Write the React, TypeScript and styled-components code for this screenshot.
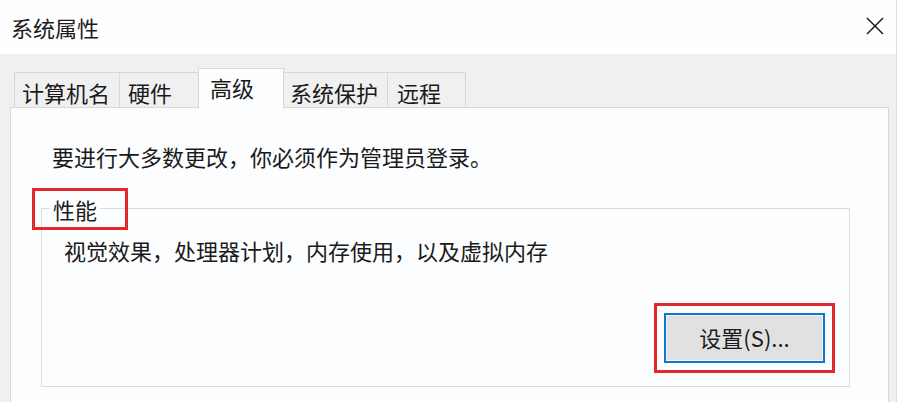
import React from "react";
import styled, { createGlobalStyle } from "styled-components";

const Global = createGlobalStyle`
  html, body { margin: 0; padding: 0; background: #ffffff; }
  body {
    font-family: "Noto Sans CJK SC", "Noto Sans", "Liberation Sans", sans-serif;
    color: #1a1a1a;
    -webkit-font-smoothing: antialiased;
  }
  * { box-sizing: border-box; }
`;

const Window = styled.div`
  width: 897px;
  height: 402px;
  display: flex;
  flex-direction: column;
  border-right: 1px solid #dedede;
  overflow: hidden;
`;

const TitleBar = styled.div`
  height: 54px;
  flex: none;
  background: #fefeff;
  display: flex;
  align-items: center;
  justify-content: space-between;
  padding: 0 12px 0 11px;
`;

const Title = styled.div`
  font-size: 22px;
  line-height: 30px;
  color: #1c1c1c;
  margin-top: -1px;
`;

const CloseBtn = styled.div`
  width: 18px;
  height: 18px;
  display: flex;
  margin-top: -3px;
`;

const Body = styled.div`
  flex: 1;
  background: #f0f0f0;
  display: flex;
  flex-direction: column;
  padding: 14px 7px 0 10px;
`;

const TabStrip = styled.div`
  display: flex;
  align-items: flex-end;
  padding-left: 4px;
  height: 40px;
  position: relative;
  z-index: 1;
`;

const Tab = styled.div<{ $w: number; $active?: boolean; $pad: number }>`
  width: ${(p) => p.$w}px;
  height: ${(p) => (p.$active ? 41 : 36)}px;
  margin-left: -1px;
  margin-bottom: ${(p) => (p.$active ? -1 : 0)}px;
  padding-left: ${(p) => p.$pad}px;
  padding-top: ${(p) => (p.$active ? 3 : 4)}px;
  background: ${(p) => (p.$active ? "#fdfeff" : "#f0f0f0")};
  border: 1px solid #d8d8d8;
  border-bottom: ${(p) => (p.$active ? "none" : "1px solid #d8d8d8")};
  font-size: 22px;
  line-height: 30px;
  white-space: nowrap;
  color: #1a1a1a;
  position: relative;
  z-index: ${(p) => (p.$active ? 2 : 1)};
  &:first-child { margin-left: 0; }
`;

const Panel = styled.div`
  flex: 1;
  margin-top: -1px;
  background: #fcfdfe;
  border: 1px solid #d8d8d8;
  border-bottom: none;
  padding: 33px 38px 0 30px;
  display: flex;
  flex-direction: column;
`;

const Intro = styled.p`
  margin: 0;
  padding-left: 11px;
  font-size: 22px;
  line-height: 30px;
  white-space: nowrap;
`;

const Group = styled.fieldset`
  margin: 22px 0 0 0;
  padding: 12px 0 13px 0;
  border: 1px solid #dcdcdc;
  display: flex;
  flex-direction: column;
  min-width: 0;
`;

const Legend = styled.legend`
  margin-left: 8px;
  padding: 3px 3px 1px 3px;
  font-size: 22px;
  line-height: 26px;
  position: relative;
  &::before {
    content: "";
    position: absolute;
    top: -5px;
    left: -18px;
    right: -28px;
    bottom: -7px;
    border: 3px solid #e2282c;
  }
`;

const Desc = styled.p`
  margin: 0;
  padding-left: 22px;
  font-size: 22px;
  line-height: 30px;
  white-space: nowrap;
`;

const ButtonRow = styled.div`
  display: flex;
  justify-content: flex-end;
  margin-top: 38px;
  padding-right: 14px;
`;

const Highlight = styled.div`
  border: 3px solid #e2282c;
  padding: 7px;
  display: flex;
`;

const Button = styled.button`
  width: 161px;
  height: 50px;
  background: #e1e1e1;
  border: 2px solid #0a78d4;
  box-shadow: inset 0 0 0 1px #f4f4f4;
  font-family: "Noto Sans CJK SC", "Noto Sans", "Liberation Sans", sans-serif;
  font-size: 22px;
  line-height: 30px;
  color: #1a1a1a;
  padding: 0 0 2px 0;
  display: flex;
  align-items: center;
  justify-content: center;
`;

const tabs = [
  { label: "计算机名", w: 106, pad: 7 },
  { label: "硬件", w: 80, pad: 8 },
  { label: "高级", w: 86, pad: 11, active: true },
  { label: "系统保护", w: 105, pad: 6 },
  { label: "远程", w: 79, pad: 9 },
];

export default function App() {
  return (
    <>
      <Global />
      <Window>
        <TitleBar>
          <Title>系统属性</Title>
          <CloseBtn>
            <svg width="18" height="18" viewBox="0 0 18 18">
              <path d="M1 1 L17 17 M17 1 L1 17" stroke="#111" strokeWidth="1.4" fill="none" />
            </svg>
          </CloseBtn>
        </TitleBar>
        <Body>
          <TabStrip>
            {tabs.map((t) => (
              <Tab key={t.label} $w={t.w} $pad={t.pad} $active={t.active}>
                {t.label}
              </Tab>
            ))}
          </TabStrip>
          <Panel>
            <Intro>要进行大多数更改，你必须作为管理员登录。</Intro>
            <Group>
              <Legend>性能</Legend>
              <Desc>视觉效果，处理器计划，内存使用，以及虚拟内存</Desc>
              <ButtonRow>
                <Highlight>
                  <Button>设置(S)...</Button>
                </Highlight>
              </ButtonRow>
            </Group>
          </Panel>
        </Body>
      </Window>
    </>
  );
}
